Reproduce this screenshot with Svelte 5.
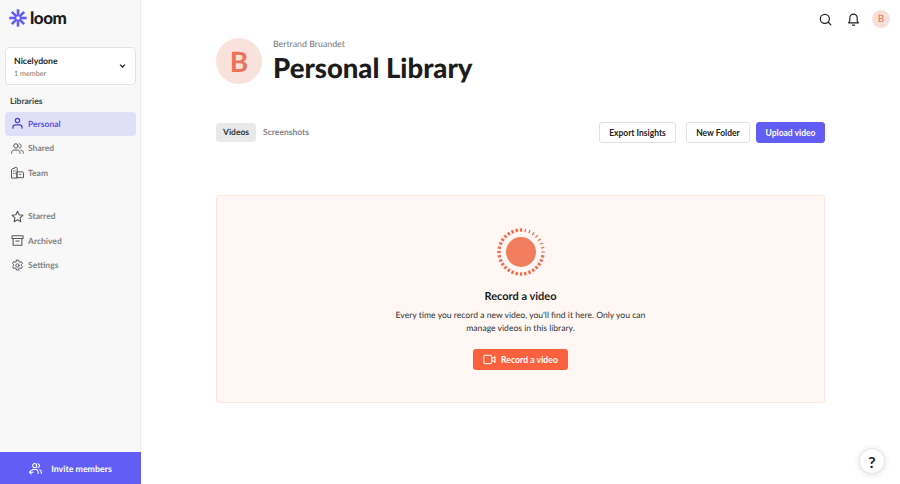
<script lang="ts">
  const topNav = [
    { label: 'Personal', icon: 'person', active: true },
    { label: 'Shared', icon: 'people' },
    { label: 'Team', icon: 'team' },
  ];
  const lowerNav = [
    { label: 'Starred', icon: 'star' },
    { label: 'Archived', icon: 'archive' },
    { label: 'Settings', icon: 'gear' },
  ];

  // ring of dashes round the record sun, thinner towards the upper right
  const ticks = Array.from({ length: 32 }, (_, i) => {
    const deg = (i * 360) / 32;
    const thin = deg > 0 && deg < 100;
    return { deg, width: thin ? 1.2 : 2.4 };
  });

  const petals = [0, 45, 90, 135];
</script>

{#snippet navIcon(name: string)}
  <svg class="nav-icon" viewBox="0 0 16 16" fill="none" stroke="currentColor" stroke-width="1.2" stroke-linecap="round" stroke-linejoin="round">
    {#if name === 'person'}
      <circle cx="8" cy="4.4" r="2.6" stroke-width="1.5" />
      <path d="M2.4 13.8v-1.2c0-1.8 1.4-3 3-3h5.2c1.6 0 3 1.2 3 3v1.2" stroke-width="1.5" />
    {:else if name === 'people'}
      <circle cx="6" cy="4.8" r="2.7" />
      <path d="M.9 14v-1.2c0-1.7 1.3-2.9 3-2.9h4.2c1.7 0 3 1.2 3 2.9V14" />
      <path d="M10.2 2.2c1.4.2 2.3 1.3 2.3 2.6s-.9 2.4-2.3 2.6M12.4 10c1.6.2 2.7 1.3 2.7 2.9V14" />
    {:else if name === 'team'}
      <path d="M.6 14.4V4.8c0-.6.4-1 .9-1.2l4.6-1.9c.7-.3 1.5.2 1.5 1v11.7zM7.6 7.2h6.4c.8 0 1.4.6 1.4 1.4v5.8H7.6z" />
      <path d="M3 6.2h.6M3 9h.6M5.2 6.2h.1M5.2 9h.1M10.8 10.4h1.4" />
    {:else if name === 'star'}
      <path d="M8 1.6l2 4.3 4.7.6-3.5 3.2.9 4.7L8 12.1l-4.1 2.3.9-4.7L1.3 6.5 6 5.9z" stroke-width="1.3" />
    {:else if name === 'archive'}
      <path d="M1.2 2.2h13.6v3.4H1.2zM2.6 5.6v8.2h10.8V5.6M6 8.6h4" stroke-width="1.3" />
    {:else}
      <circle cx="8" cy="8" r="2.1" />
      <path d="M6.7 1.4h2.6l.4 1.9 1.3.7 1.8-.7 1.3 2.3-1.4 1.2v1.4l1.4 1.2-1.3 2.3-1.8-.7-1.3.7-.4 1.9H6.7l-.4-1.9-1.3-.7-1.8.7-1.3-2.3 1.4-1.2V6.8L1.9 5.6l1.3-2.3 1.8.7 1.3-.7z" />
    {/if}
  </svg>
{/snippet}

<div class="page">
  <aside class="sidebar">
    <div class="brand">
      <svg class="logo-mark" viewBox="0 0 18 18" stroke="#625df5" stroke-width="2.6">
        {#each petals as angle}
          <line x1="9" y1="0.3" x2="9" y2="17.7" transform={`rotate(${angle} 9 9)`} />
        {/each}
        <circle cx="9" cy="9" r="1.8" fill="#f8f8f8" stroke="none" />
      </svg>
      <span class="wordmark">loom</span>
    </div>

    <div class="workspace">
      <div>
        <div class="ws-name">Nicelydone</div>
        <div class="ws-meta">1 member</div>
      </div>
      <svg class="chevron" viewBox="0 0 8 6" fill="none" stroke="#222" stroke-width="1.5"><path d="M1.2 1.4L4 4.2l2.8-2.8" /></svg>
    </div>

    <div class="section-label">Libraries</div>

    <nav class="nav">
      {#each topNav as item}
        <div class="nav-item" class:active={item.active}>
          {@render navIcon(item.icon)}
          <span>{item.label}</span>
        </div>
      {/each}
    </nav>

    <nav class="nav lower">
      {#each lowerNav as item}
        <div class="nav-item">
          {@render navIcon(item.icon)}
          <span>{item.label}</span>
        </div>
      {/each}
    </nav>

    <div class="invite">
      <svg class="invite-icon" viewBox="0 0 16 16" fill="none" stroke="currentColor" stroke-width="1.3" stroke-linecap="round" stroke-linejoin="round">
        <circle cx="7" cy="4.4" r="2.5" />
        <path d="M3.6 10.2c.8-.8 2-1.2 3.4-1.2 2.4 0 4.2 1.4 4.2 3.6V14M11 2.2c1.2.3 1.9 1.2 1.9 2.3s-.7 2-1.9 2.3M13.2 9.6c1.2.6 2 1.7 2 3.2V14M.6 12.6h4.6M2.8 10.4l-2.2 2.2 2.2 2.2" />
      </svg>
      <span>Invite members</span>
    </div>
  </aside>

  <main class="main">
    <header class="topbar">
      <svg class="top-icon search" viewBox="0 0 16 16" fill="none" stroke="#1f1f1f" stroke-width="1.5" stroke-linecap="round"><circle cx="7.2" cy="7.2" r="5.6" /><path d="M11.4 11.4l3.2 3.2" /></svg>
      <svg class="top-icon" viewBox="0 0 16 16" fill="none" stroke="#1f1f1f" stroke-width="1.4" stroke-linecap="round" stroke-linejoin="round"><path d="M2 12.2h12c-.9-1-1.5-1.9-1.5-3.2V5.8a4.5 4.5 0 0 0-9 0V9c0 1.3-.6 2.2-1.5 3.2zM6.8 15h2.4" /></svg>
      <div class="avatar-small">B</div>
    </header>

    <div class="content">
      <div class="title-row">
        <div class="avatar-big">B</div>
        <div>
          <div class="owner">Bertrand Bruandet</div>
          <h1>Personal Library</h1>
        </div>
      </div>

      <div class="toolbar">
        <div class="tabs">
          <span class="tab selected">Videos</span>
          <span class="tab">Screenshots</span>
        </div>
        <div class="actions">
          <button class="btn export">Export Insights</button>
          <button class="btn folder">New Folder</button>
          <button class="btn primary">Upload video</button>
        </div>
      </div>

      <section class="empty">
        <svg class="sun" viewBox="0 0 50 50">
          <circle cx="25" cy="25" r="15" fill="#f27e5f" />
          {#each ticks as tick}
            <line x1="25" y1="1.3" x2="25" y2="4.7" stroke="#ea6f52" stroke-width={tick.width} transform={`rotate(${tick.deg} 25 25)`} />
          {/each}
        </svg>
        <h2>Record a video</h2>
        <p>Every time you record a new video, you'll find it here. Only you can<br />manage videos in this library.</p>
        <button class="record">
          <svg class="cam" viewBox="0 0 14 12" fill="none" stroke="currentColor" stroke-width="1.1" stroke-linejoin="round"><rect x="0.8" y="1.4" width="8.6" height="9.2" rx="1.6" /><path d="M9.4 5.2l3.6-2.2v6l-3.6-2.2" /></svg>
          Record a video
        </button>
      </section>
    </div>

    <button class="help">?</button>
  </main>
</div>

<style>
  :global(body) {
    margin: 0;
    background: #fff;
  }

  .page {
    display: flex;
    height: 484px;
    overflow: hidden;
    font-family: Lato, "Liberation Sans", sans-serif;
    color: #1f1f1f;
    text-rendering: geometricPrecision;
  }

  .sidebar {
    width: 141px;
    box-sizing: border-box;
    flex-shrink: 0;
    display: flex;
    flex-direction: column;
    background: #f8f8f8;
    border-right: 1px solid #ececec;
  }

  .brand {
    display: flex;
    align-items: center;
    gap: 3px;
    height: 18px;
    margin: 9px 0 0 9px;
  }

  .logo-mark {
    width: 18px;
    height: 18px;
  }

  .wordmark {
    font-size: 17px;
    font-weight: 900;
    letter-spacing: -0.5px;
    color: #1a1a1a;
    line-height: 18px;
  }

  .workspace {
    display: flex;
    align-items: center;
    justify-content: space-between;
    box-sizing: border-box;
    width: 131px;
    height: 38px;
    margin: 20px 0 0 5px;
    padding: 0 9px 0 8px;
    background: #fff;
    border: 1px solid #e4e4e4;
    border-radius: 4px;
  }

  .ws-name {
    font-size: 8.7px;
    font-weight: 700;
    line-height: 13px;
  }

  .ws-meta {
    font-size: 7.2px;
    line-height: 11px;
    margin-top: 1px;
    color: #777;
  }

  .chevron {
    width: 7px;
    height: 6px;
  }

  .section-label {
    margin: 10px 0 0 10px;
    font-size: 8.5px;
    font-weight: 700;
    line-height: 12px;
    color: #444;
  }

  .nav {
    display: flex;
    flex-direction: column;
    gap: 0.5px;
    margin: 4.5px 0 0 5px;
    width: 131px;
  }

  .nav.lower {
    margin-top: 19.5px;
  }

  .nav-item {
    display: flex;
    align-items: center;
    gap: 4px;
    height: 24px;
    padding-left: 6px;
    border-radius: 4px;
    font-size: 8.5px;
    font-weight: 700;
    color: #838383;
  }

  .nav-item.active {
    background: #e0dff8;
    color: #5a55d6;
  }

  .nav-icon {
    width: 13px;
    height: 13px;
    color: #555;
  }

  .active .nav-icon {
    color: #4640c4;
  }

  .invite {
    margin-top: auto;
    height: 32px;
    display: flex;
    align-items: center;
    justify-content: center;
    gap: 9px;
    margin-right: -1px;
    background: #625df5;
    color: #fff;
    font-size: 8.8px;
    font-weight: 700;
  }

  .invite-icon {
    width: 13px;
    height: 13px;
  }

  .main {
    flex: 1;
    position: relative;
    min-width: 0;
  }

  .topbar {
    display: flex;
    align-items: center;
    justify-content: flex-end;
    gap: 12px;
    height: 18px;
    padding: 10px 10px 0 0;
  }

  .top-icon {
    width: 13px;
    height: 13px;
  }

  .search {
    margin-right: 3px;
  }

  .avatar-small {
    width: 18px;
    height: 18px;
    border-radius: 50%;
    background: #f9dfd9;
    color: #e5735a;
    font-size: 10px;
    text-align: center;
    line-height: 18px;
  }

  .content {
    margin: 10px 75px 0;
  }

  .title-row {
    display: flex;
    align-items: center;
    gap: 11px;
  }

  .avatar-big {
    width: 46px;
    height: 46px;
    border-radius: 50%;
    background: #f9e1dc;
    color: #ea735a;
    font-size: 28px;
    font-weight: 700;
    text-align: center;
    line-height: 46px;
  }

  .owner {
    font-size: 8.8px;
    line-height: 12px;
    color: #777;
  }

  h1 {
    margin: 2px 0 0;
    font-size: 27.5px;
    line-height: 32px;
    font-weight: 900;
    color: #1c1c1c;
  }

  .toolbar {
    display: flex;
    align-items: center;
    justify-content: space-between;
    margin-top: 38px;
  }

  .tabs {
    display: flex;
    align-items: center;
  }

  .tab {
    height: 19px;
    padding: 0 7px;
    line-height: 19px;
    border-radius: 3px;
    font-size: 8.5px;
    font-weight: 700;
    color: #838383;
  }

  .tab.selected {
    background: #e9e9ea;
    color: #333;
  }

  .actions {
    display: flex;
    gap: 10px;
  }

  .btn {
    height: 21px;
    padding: 0;
    border-radius: 3px;
    font: 700 8.5px Lato, "Liberation Sans", sans-serif;
    background: #fff;
    border: 1px solid #e2e2e2;
    color: #222;
  }

  .export {
    width: 77px;
  }

  .folder {
    width: 64px;
    margin-right: -4px;
  }

  .primary {
    width: 69px;
    background: #625df5;
    border-color: #625df5;
    color: #fff;
  }

  .empty {
    display: flex;
    flex-direction: column;
    align-items: center;
    box-sizing: border-box;
    height: 208px;
    margin-top: 52px;
    padding-top: 31px;
    background: #fff7f4;
    border: 1px solid #fbe6e0;
    border-radius: 3px;
  }

  .sun {
    width: 50px;
    height: 50px;
  }

  h2 {
    margin: 13px 0 0;
    font-size: 11px;
    line-height: 14px;
    font-weight: 700;
    color: #1c1c1c;
  }

  .empty p {
    margin: 5px 0 0;
    text-align: center;
    font-size: 8.6px;
    line-height: 13px;
    color: #333;
  }

  .record {
    display: flex;
    align-items: center;
    justify-content: center;
    gap: 5px;
    width: 95px;
    height: 21px;
    margin-top: 14px;
    padding: 0;
    border: 0;
    border-radius: 3px;
    background: #fb613d;
    color: #fff;
    font: 700 8.7px Lato, "Liberation Sans", sans-serif;
  }

  .cam {
    width: 13px;
    height: 11px;
  }

  .help {
    position: absolute;
    right: 15px;
    bottom: 10px;
    width: 26px;
    height: 26px;
    padding: 0;
    border-radius: 50%;
    border: 1px solid #e6e6e6;
    background: #fff;
    color: #222;
    font: 700 16px Lato, "Liberation Sans", sans-serif;
    box-shadow: 0 1px 6px rgba(0, 0, 0, 0.12);
  }
</style>
